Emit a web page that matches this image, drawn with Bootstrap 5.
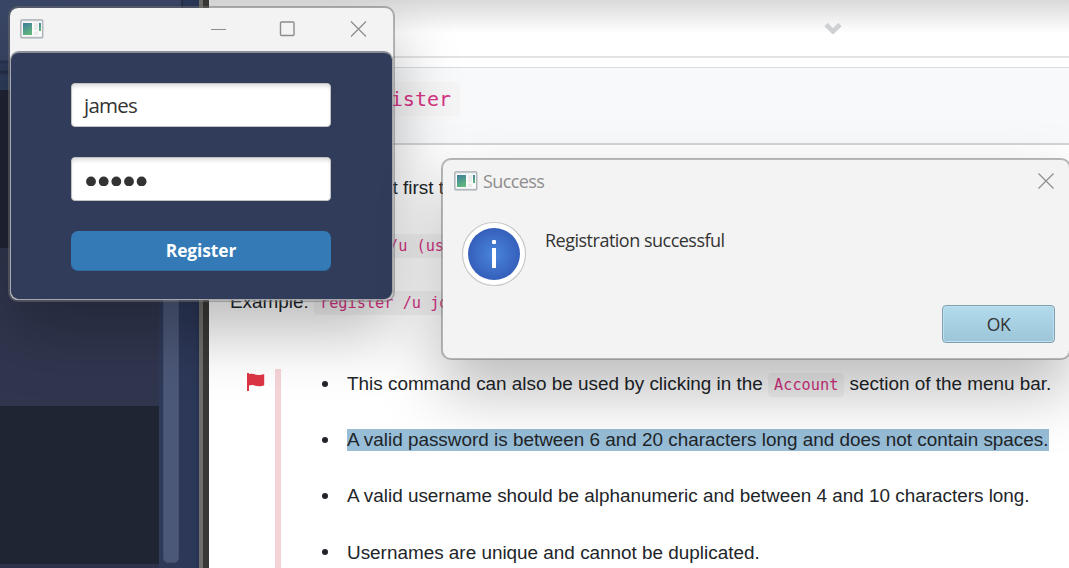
<!DOCTYPE html>
<html lang="en">
<head>
<meta charset="utf-8">
<meta name="viewport" content="width=device-width, initial-scale=1">
<title>Register</title>
<link href="https://cdn.jsdelivr.net/npm/bootstrap@5.3.0/dist/css/bootstrap.min.css" rel="stylesheet">
<style>
body{font-family:"Liberation Sans",sans-serif;font-size:18.9px;color:#212529;background:#fff}
.desk{height:568px}
/* application window behind, left side */
.app-side{width:199px}
.app-top{height:90px;background:linear-gradient(#3b4767,#3a4766 60px,#2a3553 61px,#2a3553 63px,#303c5b 64px,#303c5b 70px,#26304a 71px,#26304a 73px,#2f3d5c 75px,#2f3e5d)}
.app-top-end{width:18px;background:#2c3859;border-left:2px solid #252f49}
.app-list{width:159px}
.app-row1{height:158px;background:#202535}
.app-row2{height:158px;background:#31364f}
.app-row3{height:158px;background:#202534}
.app-row4{height:4px;background:#2e334b}
.app-scroll{width:40px;background:linear-gradient(90deg,#2f3a58,#2d3858 26px,#2b3757 36px,#26324f)}
.app-thumb{width:16px;height:473px;margin-left:4px;border-radius:5px;background:#4c5878;border:1px solid #445070}
.app-edge{width:4px;background:#706e6d}
.app-edge2{width:6px;background:#3a3835}
/* user guide page */
.guide-bar{height:58px;padding:22px 0 0 615px;background:linear-gradient(#dadada,#fff 33px);border-bottom:2px solid #e3e3e3}
.guide-head{height:78px;margin-top:9px;background:#f7f9fb;border-top:1px solid #dadbdc;border-bottom:2px solid #d3d5d6;padding-top:16px}
.guide-head-text{width:251px}
.guide-body{padding:29px 0 0 21px}
code.tok{font-family:"DejaVu Sans Mono",monospace;font-size:15.25px;color:#d63384;background:#f5f5f5;border-radius:4px;padding:3px 6px}
code.tok-head{font-size:20px;padding:5px 9px}
.line{height:57px;line-height:28px;white-space:nowrap}
.line-first{width:214px}
.note{margin-top:24px;height:199px}
.note-bar{width:6px;background:#f5d4d7}
.note-list{padding-left:66px;margin:0;line-height:29px;list-style:none}
.note-list li{height:56.2px;white-space:nowrap}
.note-list li::before{content:"";display:inline-block;width:6px;height:6px;border-radius:50%;background:#212529;margin:0 19px 3px -25px;vertical-align:middle}
.picked{background:#97bdd7;padding-bottom:1px}
/* floating windows */
.win{border-radius:10px;border:2px solid rgba(110,110,110,.5);background-clip:padding-box;box-shadow:0 30px 64px rgba(0,0,0,.27)}
.ui{font-family:"Open Sans","Noto Sans",sans-serif}
.win-reg{left:8px;top:6px;width:387px;height:296px;background-color:#f3f3f3}
.win-bar{height:43px;padding-bottom:2px}
.win-main{height:249px;width:383px;border:1px solid #a5a7ad;border-top:2px solid #8c8f98;border-radius:9px;background:#313c5a;padding:30px 61px 0 60px}
.field{height:44px;border:1px solid #c2c2c2;border-radius:4px;box-shadow:inset 0 4px 4px -2px #d8d8d8;padding:0 12px;color:#333;background-color:#fff;font-size:20.5px;letter-spacing:-.75px;font-family:"Open Sans",sans-serif}
.go{height:40px;border-radius:7px;background:#337ab7;border:0;border-bottom:1px solid #2c6aa0;color:#fff;font-size:17.4px;letter-spacing:-.1px;font-weight:700;padding:0}
.gap-field{margin-bottom:30px}
.win-ok{left:441px;top:158px;width:630px;height:202px;background-color:#f3f3f3}
.ttl{color:#8d8d8d;font-size:18px;line-height:24px;letter-spacing:-.6px;margin-left:5px}
.msg{color:#333;font-size:18px;line-height:24px;letter-spacing:-.5px;padding:7px 0 0 18px}
.okb{width:113px;height:38px;border:1px solid #7f9fb0;border-radius:4px;background:linear-gradient(#b2dbec,#9cc5d9);box-shadow:inset 0 0 0 1px #bfe0ee;font-size:17.5px;letter-spacing:-.4px;color:#333;padding:0}
</style>
</head>
<body>
<svg width="0" height="0" class="position-absolute">
 <defs>
  <linearGradient id="pane" x1="0" y1="0" x2=".4" y2="1"><stop offset="0" stop-color="#3e7aa0"/><stop offset="1" stop-color="#5fb57c"/></linearGradient>
  <symbol id="appicon" viewBox="0 0 24 20"><rect x=".8" y=".8" width="22" height="18" rx="1" fill="#e9ecee" stroke="#a3a9ae" stroke-width="1.2"/><rect x="2" y="3" width="19.6" height="14" fill="#fafafa"/><rect x="3" y="4" width="9" height="12" fill="url(#pane)"/><rect x="14" y="4" width="4" height="7" fill="#ebebeb"/><rect x="14" y="12.500" width="4" height="3.500" fill="#ebebeb"/><rect x="19" y="4" width="2" height="8" fill="url(#pane)"/></symbol>
  <radialGradient id="ball"><stop offset="0" stop-color="#4a86dc"/><stop offset="1" stop-color="#355fba"/></radialGradient>
 </defs>
</svg>
<div class="desk d-flex position-relative overflow-hidden">
 <aside class="app-side flex-shrink-0">
  <div class="app-top d-flex justify-content-end"><div class="app-top-end"></div></div>
  <div class="d-flex">
   <div class="app-list"><div class="app-row1"></div><div class="app-row2"></div><div class="app-row3"></div><div class="app-row4"></div></div>
   <div class="app-scroll"><div class="app-thumb"></div></div>
  </div>
 </aside>
 <div class="app-edge flex-shrink-0"></div><div class="app-edge2 flex-shrink-0"></div>
 <main class="flex-grow-1 overflow-hidden">
  <div class="guide-bar"><svg width="18" height="12" viewBox="0 0 18 12" class="d-block"><path d="M2 2.500 9 9.500 16 2.500" fill="none" stroke="#cfd1d2" stroke-width="4.600"/></svg></div>
  <div class="guide-head"><div class="guide-head-text text-end"><code class="tok tok-head">register</code></div></div>
  <div class="guide-body">
   <div class="line line-first text-end">You must first t</div>
   <div class="line">Format: <code class="tok">register /u (us</code></div>
   <div class="line">Example: <code class="tok">register /u jo</code></div>
   <div class="note d-flex">
    <svg width="45" height="30" viewBox="0 0 45 30" class="flex-shrink-0"><path d="M17 4h2v1.200c4-1.400 6.500 1.100 10 .8 1.500-.1 3-.5 5.200-1.100v11.300c-4 1.800-7 1-9.700.2-2-.6-4-.6-5.500.1v5.500H17z" fill="#dc3545"/></svg>
    <div class="note-bar flex-shrink-0"></div>
    <ul class="note-list">
     <li>This command can also be used by clicking in the <code class="tok">Account</code> section of the menu bar.</li>
     <li><span class="picked">A valid password is between 6 and 20 characters long and does not contain spaces.</span></li>
     <li>A valid username should be alphanumeric and between 4 and 10 characters long.</li>
     <li>Usernames are unique and cannot be duplicated.</li>
    </ul>
   </div>
  </div>
 </main>

 <section class="win win-reg ui position-absolute">
  <header class="d-flex align-items-center win-bar"><svg width="24" height="20" style="margin-left:10px"><use href="#appicon"/></svg>
   <svg width="160" height="16" viewBox="0 0 160 16" class="ms-auto" style="margin-right:25px"><path d="M3 8.500h15" stroke="#8c8c8c"/><rect x="72.500" y="1" width="13.500" height="13.500" rx="1" fill="none" stroke="#8c8c8c" stroke-width="1.400"/><path d="M143 .500 158 15.500M158 .500 143 15.500" stroke="#8c8c8c" stroke-width="1.200"/></svg></header>
  <div class="win-main d-flex flex-column">
   <div class="field gap-field d-flex align-items-center flex-shrink-0">james</div>
   <div class="field gap-field d-flex align-items-center flex-shrink-0"><svg width="66" height="14" viewBox="0 0 66 14"><g fill="#333"><circle cx="7" cy="9.500" r="4.900"/><circle cx="19.700" cy="9.500" r="4.900"/><circle cx="32.300" cy="9.500" r="4.900"/><circle cx="45" cy="9.500" r="4.900"/><circle cx="57.600" cy="9.500" r="4.900"/></g></svg></div>
   <button class="go w-100 flex-shrink-0">Register</button>
  </div>
 </section>

 <section class="win win-ok ui position-absolute">
  <header class="d-flex align-items-center win-bar"><svg width="24" height="20" style="margin-left:11px"><use href="#appicon"/></svg><span class="ttl">Success</span>
   <svg width="16" height="16" viewBox="0 0 16 16" class="ms-auto" style="margin-right:15px"><path d="M.5.500 15.500 15.500M15.500.500.500 15.500" stroke="#8c8c8c" stroke-width="1.200"/></svg></header>
  <div class="d-flex" style="padding:18px 0 0 18px">
   <svg width="66" height="66" viewBox="0 0 66 66"><circle cx="33" cy="33" r="31.500" fill="#fff" stroke="#c9c9c9" stroke-width="1.200"/><circle cx="33" cy="33" r="26" fill="url(#ball)"/><rect x="31" y="19" width="4" height="4" rx="1" fill="#fff"/><path d="M33 27V47" stroke="#fff" stroke-width="4"/></svg>
   <div class="msg">Registration successful</div>
  </div>
  <div class="d-flex justify-content-end" style="padding:18px 14px 0 0"><button class="okb">OK</button></div>
 </section>
</div>
<script src="https://cdn.jsdelivr.net/npm/bootstrap@5.3.0/dist/js/bootstrap.bundle.min.js"></script>
</body>
</html>
